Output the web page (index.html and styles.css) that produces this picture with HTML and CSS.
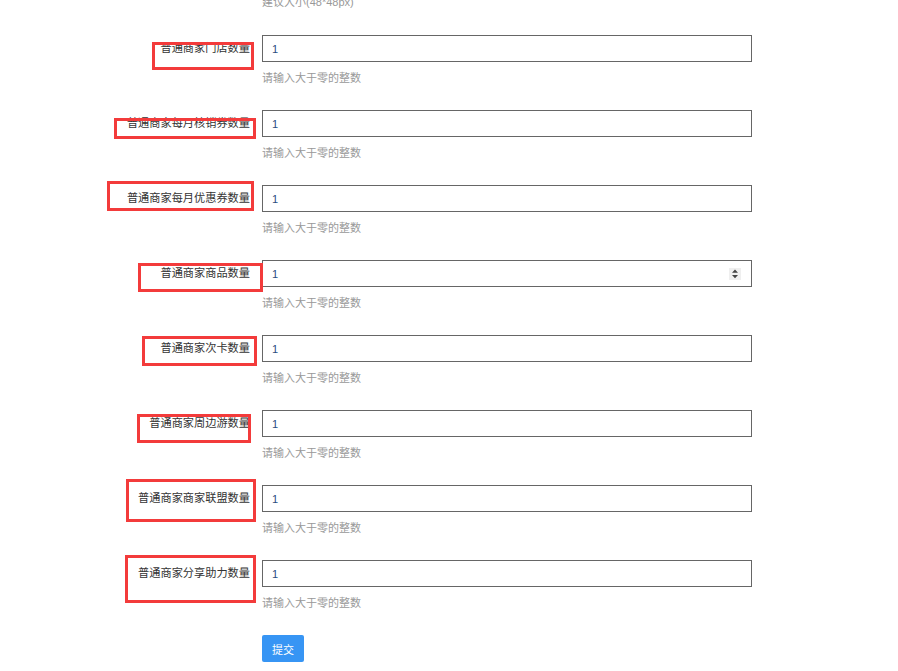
FILE: index.html
```html
<!DOCTYPE html>
<html lang="zh-CN">
<head>
  <meta charset="UTF-8" />
  <meta name="viewport" content="width=device-width, initial-scale=1.0"/>
  <title>普通商家配置</title>
  <link rel="stylesheet" href="styles.css">
</head>
<body>
  <div class="page">
    <div class="form-row prev-row">
      <div class="form-label"></div>
      <div class="form-field">
        <div class="hint">建议大小(48*48px)</div>
      </div>
    </div>

    <div class="form-row">
      <label class="form-label">普通商家门店数量</label>
      <div class="form-field">
        <div class="input-box"><input type="text" value="1"></div>
        <div class="hint">请输入大于零的整数</div>
      </div>
    </div>

    <div class="form-row">
      <label class="form-label">普通商家每月核销券数量</label>
      <div class="form-field">
        <div class="input-box"><input type="text" value="1"></div>
        <div class="hint">请输入大于零的整数</div>
      </div>
    </div>

    <div class="form-row">
      <label class="form-label">普通商家每月优惠券数量</label>
      <div class="form-field">
        <div class="input-box"><input type="text" value="1"></div>
        <div class="hint">请输入大于零的整数</div>
      </div>
    </div>

    <div class="form-row">
      <label class="form-label">普通商家商品数量</label>
      <div class="form-field">
        <div class="input-box">
          <input type="text" value="1">
          <span class="spin">
            <svg width="12" height="12" viewBox="0 0 12 12"><path d="M3 4.8 L9 4.8 L6 1.6 Z M3 7 L9 7 L6 10.2 Z" fill="#444"/></svg>
          </span>
        </div>
        <div class="hint">请输入大于零的整数</div>
      </div>
    </div>

    <div class="form-row">
      <label class="form-label">普通商家次卡数量</label>
      <div class="form-field">
        <div class="input-box"><input type="text" value="1"></div>
        <div class="hint">请输入大于零的整数</div>
      </div>
    </div>

    <div class="form-row">
      <label class="form-label">普通商家周边游数量</label>
      <div class="form-field">
        <div class="input-box"><input type="text" value="1"></div>
        <div class="hint">请输入大于零的整数</div>
      </div>
    </div>

    <div class="form-row">
      <label class="form-label">普通商家商家联盟数量</label>
      <div class="form-field">
        <div class="input-box"><input type="text" value="1"></div>
        <div class="hint">请输入大于零的整数</div>
      </div>
    </div>

    <div class="form-row">
      <label class="form-label">普通商家分享助力数量</label>
      <div class="form-field">
        <div class="input-box"><input type="text" value="1"></div>
        <div class="hint">请输入大于零的整数</div>
      </div>
    </div>

    <div class="form-row">
      <div class="form-label"></div>
      <div class="form-field">
        <button class="btn-submit">提交</button>
      </div>
    </div>

    <!-- 标注框 -->
    <div class="mark mark-1"></div>
    <div class="mark mark-2"></div>
    <div class="mark mark-3"></div>
    <div class="mark mark-4"></div>
    <div class="mark mark-5"></div>
    <div class="mark mark-6"></div>
    <div class="mark mark-7"></div>
    <div class="mark mark-8"></div>
  </div>
</body>
</html>
```

FILE: styles.css
```css
:root {
  --text: #333333;
  --muted: #999999;
  --border: #666666;
  --primary: #3795f4;
  --mark: #f33b3b;
}

body {
  margin: 0;
  background: #ffffff;
  color: var(--text);
  font-family: 'Liberation Sans', 'Noto Sans CJK SC', sans-serif;
  font-size: 11px;
}

.page {
  position: relative;
  display: flow-root;
  width: 898px;
  height: 671px;
  overflow: hidden;
}

.form-row {
  display: grid;
  grid-template-columns: 250px 490px;
  column-gap: 12px;
  align-items: start;
  margin-bottom: 24px;
}

.prev-row {
  margin-top: -6px;
  margin-bottom: 25px;
}

.form-label {
  height: 27px;
  line-height: 27px;
  font-size: 11.2px;
  text-align: right;
  white-space: nowrap;
}

.prev-row .form-label {
  height: 0;
}

.input-box {
  display: flex;
  align-items: center;
  height: 27px;
  box-sizing: border-box;
  border: 1px solid var(--border);
  background: #fff;
}

.input-box input {
  flex: 1;
  min-width: 0;
  height: 100%;
  border: none;
  outline: none;
  padding: 0 9px;
  font-family: inherit;
  font-size: 11px;
  color: #2b4c7e;
  background: transparent;
}

.spin {
  display: flex;
  width: 12px;
  height: 12px;
  margin-right: 10px;
  background: #efefef;
}

.hint {
  margin-top: 8px;
  line-height: 16px;
  color: var(--muted);
}

.prev-row .hint {
  margin-top: 0;
}

.btn-submit {
  width: 42px;
  height: 27px;
  padding: 0;
  border: none;
  border-radius: 2px;
  background: var(--primary);
  color: #fff;
  font-family: inherit;
  font-size: 11px;
  cursor: pointer;
}

.mark {
  position: absolute;
  border: 3px solid var(--mark);
  box-sizing: border-box;
}

.mark-1 { left: 152px; top: 42px;  width: 102px; height: 28px; }
.mark-2 { left: 114px; top: 118px; width: 142px; height: 21px; }
.mark-3 { left: 107px; top: 181px; width: 147px; height: 30px; }
.mark-4 { left: 138px; top: 263px; width: 125px; height: 29px; }
.mark-5 { left: 142px; top: 336px; width: 115px; height: 30px; }
.mark-6 { left: 137px; top: 414px; width: 114px; height: 29px; }
.mark-7 { left: 126px; top: 479px; width: 130px; height: 43px; }
.mark-8 { left: 125px; top: 555px; width: 131px; height: 48px; }
```
